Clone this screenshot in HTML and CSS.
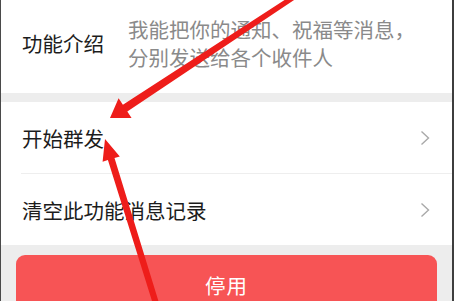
FILE: index.html
```html
<!DOCTYPE html>
<html lang="zh-CN">
<head>
<meta charset="utf-8">
<link rel="stylesheet" href="styles.css">
</head>
<body>
<div class="page">
  <div class="card intro">
    <div class="label">功能介绍</div>
    <div class="desc">我能把你的通知、祝福等消息，<br>分别发送给各个收件人</div>
  </div>
  <div class="card list">
    <div class="row">
      <span class="label">开始群发</span>
      <svg class="chev" viewBox="0 0 10 16" width="10" height="16"><path d="M1.5 1.5 L8.5 8 L1.5 14.5" fill="none" stroke="#a9a9a9" stroke-width="1.4"/></svg>
    </div>
    <div class="divider"></div>
    <div class="row">
      <span class="label">清空此功能消息记录</span>
      <svg class="chev" viewBox="0 0 10 16" width="10" height="16"><path d="M1.5 1.5 L8.5 8 L1.5 14.5" fill="none" stroke="#a9a9a9" stroke-width="1.4"/></svg>
    </div>
  </div>
  <div class="btn">停用</div>
  <svg class="arrows" width="454" height="301" viewBox="0 0 454 301">
    <polygon fill="#ee1d1a" points="110,118 118.6,98.2 122.9,104.8 298.6,-9.1 301.4,-4.9 127.3,111.4 131.6,118"/>
    <polygon fill="#ee1d1a" points="105,139 119.8,156.4 114.5,158.1 160.9,309.1 155.1,310.9 107.9,160.1 102.6,161.8"/>
  </svg>
</div>
</body>
</html>
```
FILE: styles.css
```css
html, body {
  margin: 0;
  padding: 0;
}
body {
  width: 454px;
  height: 301px;
  overflow: hidden;
  font-family: "Noto Sans CJK SC", "Noto Sans", sans-serif;
}
.page {
  position: relative;
  height: 301px;
  background: #ededed;
  border-left: 1px solid #4a4a4a;
  border-right: 2px solid #3e3e3e;
  overflow: hidden;
}
.card {
  background: #fff;
}
.intro {
  height: 85px;
  display: flex;
  align-items: center;
  padding-left: 21px;
  padding-bottom: 8px;
}
.label {
  font-size: 20.5px;
  color: #1c1c1c;
  line-height: 28px;
}
.intro .label {
  width: 106px;
  flex: none;
}
.desc {
  font-size: 20.5px;
  line-height: 28px;
  color: #8a8a8a;
}
.list {
  margin-top: 9px;
}
.row {
  height: 71px;
  display: flex;
  align-items: center;
  justify-content: space-between;
  padding-left: 21px;
  padding-right: 22px;
}
.divider {
  height: 1px;
  margin-left: 20px;
  background: #eeeeee;
}
.chev {
  display: block;
}
.btn {
  margin: 10px 15px 0;
  height: 60px;
  border-radius: 9px;
  background: #f75455;
  color: #fff;
  font-size: 20.5px;
  display: flex;
  align-items: center;
  justify-content: center;
  letter-spacing: 1px;
}
.arrows {
  position: absolute;
  left: -1px;
  top: 0;
}
```
